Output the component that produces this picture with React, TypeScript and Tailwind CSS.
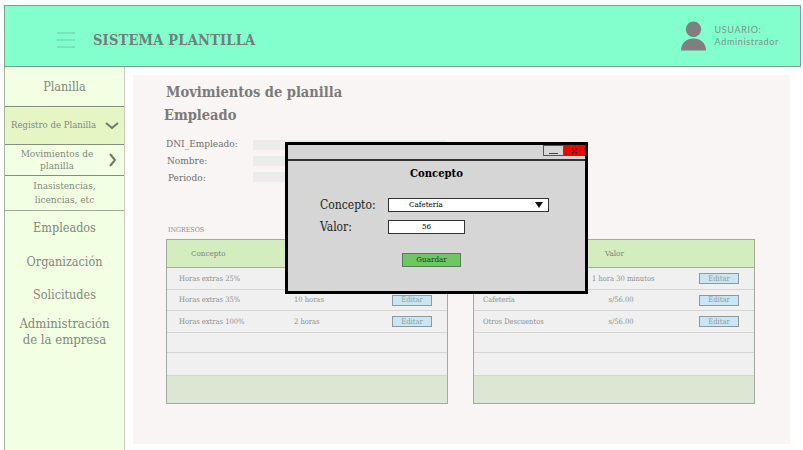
import React from "react";

const serif = "font-['DejaVu_Serif_Condensed','DejaVu_Serif',serif]";

function Row({ a, b, h, aClass, bClass }: { a?: string; b?: string; h: string; aClass: string; bClass: string }) {
  return (
    <div className={`flex items-center border-b border-[#d4d4d4] ${h} text-[7.5px] text-[#8f8f8f]`}>
      <span className={aClass}>{a}</span>
      <span className={bClass}>{b}</span>
      {a && (
        <span className="flex h-[11px] w-[40px] items-center justify-center border border-[#8a9aa0] bg-[#c9e6f2] text-[7.5px] text-[#8f9da3]">
          Editar
        </span>
      )}
    </div>
  );
}

function DataTable({ rows, aClass, bClass, valueHead }: { rows: [string, string][]; aClass: string; bClass: string; valueHead: string }) {
  const heights = ["h-[22px]", "h-[21px]", "h-[22px]", "h-[20px]", "h-[23px]"];
  return (
    <div className="flex h-[165px] w-[282px] flex-col border border-[#a3a8a0] bg-[#f0f0f0]">
      <div className="flex h-[28px] shrink-0 items-center border-b border-[#a3a8a0] bg-[#d3edbe] text-[8px] text-[#808080]">
        <span className="ml-[24px] w-[100px]">Concepto</span>
        <span className={valueHead}>Valor</span>
      </div>
      {heights.map((h, i) => (
        <Row key={i} h={h} a={rows[i]?.[0]} b={rows[i]?.[1]} aClass={aClass} bClass={bClass} />
      ))}
      <div className="flex-1 bg-[#dce6d2]" />
    </div>
  );
}

function Field({ label, labelClass }: { label: string; labelClass: string }) {
  return (
    <div className="flex h-[10px] items-center">
      <span className={`w-[87px] text-[10px] text-[#6e6e6e] ${labelClass}`}>{label}</span>
      <span className="h-[10px] w-[194px] bg-[#ececec]" />
    </div>
  );
}

export default function App() {
  return (
    <div className={`relative h-[450px] w-[803px] overflow-hidden bg-white pl-[4px] pt-[5px] ${serif}`}>
      <header className="flex h-[62px] w-[797px] items-center border border-[#7f9f93] bg-[#82ffcd]">
        <div className="flex items-center pt-[8px]">
          <svg width="18" height="16" viewBox="0 0 18 16" className="ml-[52px]">
            <path d="M0 1h18M0 8h18M0 15h18" stroke="#6fc9a8" strokeWidth="1" />
          </svg>
          <span className="ml-[18px] text-[14.500px] font-bold tracking-[0.2px] text-[#6f7f79]">SISTEMA PLANTILLA</span>
        </div>
        <div className="ml-auto mr-[21px] flex items-center">
          <svg width="25" height="30" viewBox="0 0 26 30">
            <circle cx="13" cy="8" r="8" fill="#7f7f7f" />
            <path d="M0 30C0 22 6 17.500 13 17.500S26 22 26 30Z" fill="#7f7f7f" />
          </svg>
          <div className="ml-[9px] font-['Lato',sans-serif] text-[9px] leading-[12px] tracking-[0.65px] text-[#7f8f88]">
            <div>USUARIO:</div>
            <div>Administrador</div>
          </div>
        </div>
      </header>

      <div className="flex h-[384px]">
        <aside className="flex w-[121px] shrink-0 flex-col border-x border-x-[#a9b3a0] border-r-[#c5d0bc] bg-[#f3ffe3] text-[#808a80]">
          <div className="flex h-[40px] items-center justify-center border-b border-[#858f7d] pt-[2px] text-[12.500px]">Planilla</div>
          <div className="flex h-[38px] items-center border-b border-[#858f7d] bg-[#e6f5c4] pl-[6px] text-[9.500px]">
            <span>Registro de Planilla</span>
            <svg width="14" height="8" viewBox="0 0 14 8" className="ml-[9px]">
              <path d="M1 1l6 5 6-5" fill="none" stroke="#6f7a6a" strokeWidth="2" />
            </svg>
          </div>
          <div className="flex h-[31px] items-center border-b border-[#858f7d] text-center text-[10px] leading-[12px]">
            <span className="ml-[7px] w-[90px]">Movimientos de planilla</span>
            <svg width="8" height="14" viewBox="0 0 8 14" className="ml-[7px]">
              <path d="M1 1l5 6-5 6" fill="none" stroke="#6f7a6a" strokeWidth="2" />
            </svg>
          </div>
          <div className="flex h-[35px] items-center justify-center border-b border-[#a0aa98] px-[20px] text-center text-[10px] leading-[14px]">
            Inasistencias, licencias, etc
          </div>
          <div className="mt-[9px] text-center text-[12.500px] leading-[16px]">Empleados</div>
          <div className="mt-[18px] text-center text-[12.500px] leading-[16px]">Organización</div>
          <div className="mt-[17px] text-center text-[12.500px] leading-[16px]">Solicitudes</div>
          <div className="mt-[13px] text-center text-[13px] leading-[16px]">
            Administración
            <br />
            de la empresa
          </div>
        </aside>

        <main className="ml-[8px] mt-[8px] h-[369px] w-[657px] bg-[#f8f5f4] pl-[33px] pt-[8px]">
          <h1 className="text-[14.500px] font-bold leading-[18px] text-[#7a7a7a]">Movimientos de planilla</h1>
          <h2 className="-ml-[2px] mt-[5px] text-[14.500px] font-bold leading-[18px] text-[#7a7a7a]">Empleado</h2>
          <div className="mt-[16px] flex flex-col gap-[6px]">
            <Field label="DNI_Empleado:" labelClass="pb-[3px]" />
            <Field label="Nombre:" labelClass="pb-[2px] pl-[1px]" />
            <Field label="Periodo:" labelClass="pl-[2px]" />
          </div>
          <div className="ml-[2px] mt-[43px] text-[7px] leading-[10px] text-[#8a8a8a]">INGRESOS</div>
          <div className="mt-[4px] flex gap-[25px]">
            <DataTable
              valueHead="ml-[3px] opacity-0"
              aClass="ml-[12px] w-[115px]"
              bClass="w-[98px]"
              rows={[["Horas extras 25%", ""], ["Horas extras 35%", "10 horas"], ["Horas extras 100%", "2 horas"]]}
            />
            <DataTable
              valueHead="ml-[7px]"
              aClass="ml-[9px] w-[109px]"
              bClass="mr-[49px] w-[58px] whitespace-nowrap text-center"
              rows={[["Descuento", "1 hora 30 minutos"], ["Cafetería", "s/56.00"], ["Otros Descuentos", "s/56.00"]]}
            />
          </div>
        </main>
      </div>

      <div className="absolute left-[285px] top-[142px] flex h-[152px] w-[303px] flex-col border-[3px] border-black bg-[#d6d6d6] text-black">
        <div className="flex h-[16px] shrink-0 justify-end border-b-2 border-[#333]">
          <span className="flex h-[11px] w-[21px] items-end justify-center border border-[#555] bg-[#d6d6d6] pb-[1px]">
            <span className="h-px w-[9px] bg-[#444]" />
          </span>
          <span className="flex h-[11px] w-[21px] items-center justify-center bg-[#f00000]">
            <svg width="7" height="6" viewBox="0 0 7 6"><path d="M1 0.500l5 5M6 0.500l-5 5" stroke="#5a1010" strokeWidth="1.400" /></svg>
          </span>
        </div>
        <div className="mt-[4px] text-center text-[11.200px] font-bold leading-[16px]">Concepto</div>
        <div className="ml-[32px] mt-[17px] flex h-[14px] items-center">
          <span className="w-[68px] text-[12px] text-[#222]">Concepto:</span>
          <div className="flex h-[14px] w-[161px] items-center border border-[#333] bg-white pl-[20px] text-[8px]">
            Cafetería
            <svg width="8" height="6" viewBox="0 0 8 6" className="ml-auto mr-[5px]"><path d="M0 0h8L4 6Z" fill="#111" /></svg>
          </div>
        </div>
        <div className="ml-[32px] mt-[8px] flex h-[14px] items-center">
          <span className="w-[68px] text-[12px] text-[#222]">Valor:</span>
          <div className="flex h-[14px] w-[77px] items-center justify-center border border-[#333] bg-white text-[8px]">56</div>
        </div>
        <div className="ml-[114px] mt-[19px] flex h-[14px] w-[59px] items-center justify-center border border-[#5a7a58] bg-[#6ec763] text-[8px] text-[#1c3a1c]">
          Guardar
        </div>
      </div>
    </div>
  );
}
